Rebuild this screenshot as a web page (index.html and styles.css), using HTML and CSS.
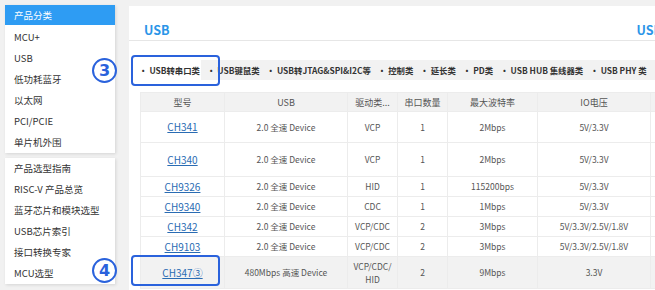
FILE: index.html
```html
<!DOCTYPE html>
<html lang="zh-CN">
<head>
    <meta charset="UTF-8">
    <meta name="viewport" content="width=device-width, initial-scale=1.0">
    <title>USB 产品分类</title>
    <link rel="stylesheet" href="styles.css">
</head>
<body>
    <div class="page">
        <aside class="sidebar">
            <div class="card">
                <div class="card-head">产品分类</div>
                <ul class="menu first">
                    <li>MCU+</li>
                    <li>USB</li>
                    <li>低功耗蓝牙</li>
                    <li>以太网</li>
                    <li>PCI/PCIE</li>
                    <li>单片机外围</li>
                </ul>
            </div>
            <div class="card">
                <ul class="menu">
                    <li>产品选型指南</li>
                    <li>RISC-V 产品总览</li>
                    <li>蓝牙芯片和模块选型</li>
                    <li>USB芯片索引</li>
                    <li>接口转换专家</li>
                    <li>MCU选型</li>
                </ul>
            </div>
        </aside>

        <main class="panel">
            <div class="panel-head">
                <span class="title">USB</span>
                <span class="title">USB</span>
            </div>
            <div class="tabs">
                <span class="tab active">USB转串口类</span>
                <span class="tab">USB键鼠类</span>
                <span class="tab">USB转JTAG&amp;SPI&amp;I2C等</span>
                <span class="tab">控制类</span>
                <span class="tab">延长类</span>
                <span class="tab">PD类</span>
                <span class="tab">USB HUB 集线器类</span>
                <span class="tab">USB PHY 类</span>
            </div>
            <table class="chips">
                <colgroup>
                    <col style="width:84px">
                    <col style="width:123px">
                    <col style="width:50px">
                    <col style="width:50px">
                    <col style="width:90px">
                    <col style="width:113px">
                    <col style="width:60px">
                </colgroup>
                <thead>
                    <tr>
                        <th>型号</th><th>USB</th><th>驱动类...</th><th>串口数量</th><th>最大波特率</th><th>IO电压</th><th></th>
                    </tr>
                </thead>
                <tbody>
                    <tr class="r31">
                        <td><a href="#">CH341</a></td><td>2.0 全速 Device</td><td>VCP</td><td>1</td><td>2Mbps</td><td>5V/3.3V</td><td></td>
                    </tr>
                    <tr class="r34">
                        <td><a href="#">CH340</a></td><td>2.0 全速 Device</td><td>VCP</td><td>1</td><td>2Mbps</td><td>5V/3.3V</td><td></td>
                    </tr>
                    <tr>
                        <td><a href="#">CH9326</a></td><td>2.0 全速 Device</td><td>HID</td><td>1</td><td>115200bps</td><td>5V/3.3V</td><td></td>
                    </tr>
                    <tr>
                        <td><a href="#">CH9340</a></td><td>2.0 全速 Device</td><td>CDC</td><td>1</td><td>1Mbps</td><td>5V/3.3V</td><td></td>
                    </tr>
                    <tr>
                        <td><a href="#">CH342</a></td><td>2.0 全速 Device</td><td>VCP/CDC</td><td>2</td><td>3Mbps</td><td>5V/3.3V/2.5V/1.8V</td><td></td>
                    </tr>
                    <tr>
                        <td><a href="#">CH9103</a></td><td>2.0 全速 Device</td><td>VCP/CDC</td><td>2</td><td>3Mbps</td><td>5V/3.3V/2.5V/1.8V</td><td></td>
                    </tr>
                    <tr class="hover">
                        <td><a href="#">CH347③</a></td><td>480Mbps 高速 Device</td><td>VCP/CDC/<br>HID</td><td>2</td><td>9Mbps</td><td>3.3V</td><td></td>
                    </tr>
                </tbody>
            </table>
        </main>
    </div>

    <div class="mark box3"></div>
    <div class="badge badge3">3</div>
    <div class="mark box4"></div>
    <div class="badge badge4">4</div>
</body>
</html>
```

FILE: styles.css
```css
html, body {
    margin: 0;
    overflow: hidden;
}

body {
    background: #f1f1f1;
    font-family: "Noto Sans CJK SC", "Noto Sans", sans-serif;
    color: #333;
    width: 655px;
    height: 290px;
    position: relative;
}

.page {
    display: flex;
    align-items: flex-start;
    padding: 5px 0 0 5px;
}

.sidebar {
    width: 110px;
    display: flex;
    flex-direction: column;
    gap: 5px;
    flex-shrink: 0;
}

.card {
    background: #fff;
    box-shadow: 1px 1px 3px rgba(0, 0, 0, 0.12);
}

.card-head {
    background: #2e9cf3;
    color: #fff;
    font-size: 9.5px;
    height: 20px;
    line-height: 20px;
    padding-left: 9px;
}

.menu {
    list-style: none;
    margin: 0;
    padding: 0;
}

.menu.first {
    padding: 2px 0 0;
}

.menu li {
    height: 21px;
    line-height: 21px;
    font-size: 9.5px;
    padding-left: 9px;
    white-space: nowrap;
}

.panel {
    margin: 1px 0 0 14px;
    width: 545px;
    height: 300px;
    background: #fff;
    flex-shrink: 0;
}

.panel-head {
    display: flex;
    justify-content: space-between;
    height: 34px;
    padding: 0 12px 0 15px;
    border-bottom: 1px solid #e6e6e6;
}

.title {
    color: #2b95e8;
    font-weight: bold;
    font-size: 12.5px;
    line-height: 14px;
    padding-top: 17px;
}

.tabs {
    display: flex;
    align-items: center;
    margin: 19px 0 0 3px;
    height: 20px;
    background: #f2f2f2;
    white-space: nowrap;
}

.tab {
    font-size: 8.4px;
    font-weight: 600;
    color: #333;
    padding: 0 1px 0 6px;
    line-height: 20px;
    flex-shrink: 0;
}

.tab::before {
    content: "•";
    margin-right: 2px;
}

.tab.active {
    background: #fff;
    padding: 0 1px 0 7px;
}

.chips {
    margin: 12px 0 0 11px;
    border-collapse: collapse;
    table-layout: fixed;
    width: 570px;
    font-size: 8.5px;
    color: #555;
}

.chips th, .chips td {
    border: 1px solid #ececec;
    text-align: center;
    padding: 0;
    line-height: 13px;
}

.chips th {
    background: #f2f2f2;
    font-weight: normal;
    height: 18px;
    font-size: 9px;
}

.chips td {
    height: 19px;
}

.chips tr.r31 td {
    height: 30px;
}

.chips tr.r34 td {
    height: 33px;
}

.chips tr.hover td {
    background: #f2f2f2;
    height: 31px;
}

.chips a {
    color: #2a6cb3;
    font-size: 10px;
}

.mark {
    position: absolute;
    left: 131px;
    width: 85px;
    height: 27px;
    border: 2px solid #2a62dc;
    border-radius: 4px;
}

.box3 {
    top: 55px;
}

.box4 {
    top: 255px;
}

.badge {
    position: absolute;
    left: 92px;
    width: 21px;
    height: 21px;
    border: 2px solid #2a62dc;
    border-radius: 50%;
    color: #2a62dc;
    font-family: "DejaVu Sans", sans-serif;
    font-weight: bold;
    font-size: 16px;
    line-height: 21px;
    text-align: center;
}

.badge3 {
    top: 58px;
}

.badge4 {
    top: 258px;
}
```
